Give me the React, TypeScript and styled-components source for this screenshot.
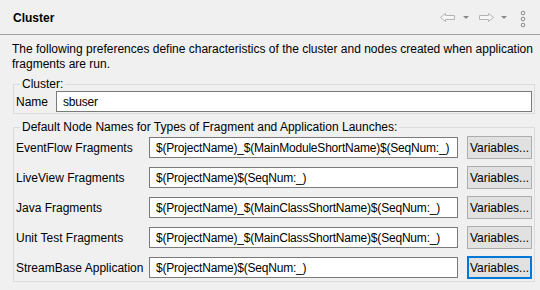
import React from 'react';
import styled, { createGlobalStyle } from 'styled-components';

const GlobalStyle = createGlobalStyle`
  html, body {
    margin: 0;
    padding: 0;
    background: #f0f0f0;
  }
  body {
    font-family: 'Liberation Sans', Arial, sans-serif;
    font-size: 12px;
    color: #000;
  }
`;

const Page = styled.div`
  width: 540px;
  height: 290px;
  overflow: hidden;
  background: #f0f0f0;
`;

const Header = styled.header`
  height: 35px;
  box-sizing: border-box;
  display: flex;
  align-items: center;
  justify-content: space-between;
  padding: 1px 14px 0 13px;
  border-bottom: 1px solid #a0a0a0;
`;

const Title = styled.h1`
  margin: 0;
  font-size: 12px;
  font-weight: bold;
`;

const Toolbar = styled.div`
  display: flex;
  align-items: center;
`;

const ToolIcon = styled.svg<{ $gap?: number; $shift?: number }>`
  display: block;
  margin-left: ${p => p.$gap ?? 0}px;
  margin-top: ${p => p.$shift ?? 0}px;
`;

const Description = styled.p`
  margin: 7px 6px 0 12px;
  line-height: 15px;
`;

const Group = styled.fieldset<{ $top: number }>`
  margin: ${p => p.$top}px 5px 0 13px;
  padding: 0 2px ${p => (p.$top > 5 ? 2 : 1)}px 2px;
  border: 1px solid #dcdcdc;
  min-width: 0;
`;

const Legend = styled.legend`
  padding: 0 2px;
  margin-left: 4px;
  line-height: 14px;
`;

const NameRow = styled.div`
  display: flex;
  align-items: center;
`;

const NameLabel = styled.label`
  width: 40px;
  flex: none;
`;

const TextField = styled.input`
  box-sizing: border-box;
  height: 21px;
  min-width: 0;
  margin: 0;
  padding: 0 6px;
  border: 1px solid #7a7a7a;
  background: #fff;
  font: inherit;
  letter-spacing: -0.2px;
  color: #000;
  outline: none;
`;

const NameField = styled(TextField)`
  flex: 1;
`;

const LaunchGrid = styled.div`
  display: grid;
  grid-template-columns: 124px 1fr 65px;
  column-gap: 9px;
  row-gap: 7px;
  align-items: center;
  padding-top: 2px;
`;

const RowLabel = styled.label`
  white-space: nowrap;
`;

const VarButton = styled.button<{ $focused?: boolean }>`
  box-sizing: border-box;
  height: 23px;
  margin: 0;
  padding: 0;
  background: #e1e1e1;
  border: ${p => (p.$focused ? '2px solid #0078d7' : '1px solid #adadad')};
  font: inherit;
  color: #000;
  white-space: nowrap;
`;

const launches = [
  { label: 'EventFlow Fragments', value: '$(ProjectName)_$(MainModuleShortName)$(SeqNum:_)' },
  { label: 'LiveView Fragments', value: '$(ProjectName)$(SeqNum:_)' },
  { label: 'Java Fragments', value: '$(ProjectName)_$(MainClassShortName)$(SeqNum:_)' },
  { label: 'Unit Test Fragments', value: '$(ProjectName)_$(MainClassShortName)$(SeqNum:_)' },
  { label: 'StreamBase Application', value: '$(ProjectName)$(SeqNum:_)' },
];

const BackArrow = () => (
  <ToolIcon width="15" height="10" viewBox="0 0 15 10">
    <polygon points="0.5,4.5 5.5,0.5 5.5,2.5 14.5,2.5 14.5,6.5 5.5,6.5 5.5,8.5" fill="#f6f6f6" stroke="#b4b4b4" />
  </ToolIcon>
);

const ForwardArrow = ({ gap }: { gap: number }) => (
  <ToolIcon width="15" height="10" viewBox="0 0 15 10" $gap={gap}>
    <polygon points="14.5,4.5 9.5,0.5 9.5,2.5 0.5,2.5 0.5,6.5 9.5,6.5 9.5,8.5" fill="#f6f6f6" stroke="#b4b4b4" />
  </ToolIcon>
);

const DropDown = ({ gap }: { gap: number }) => (
  <ToolIcon width="6" height="3" viewBox="0 0 6 3" $gap={gap}>
    <polygon points="0,0 6,0 3,3" fill="#8a8a8a" />
  </ToolIcon>
);

const ViewMenu = ({ gap }: { gap: number }) => (
  <ToolIcon width="6" height="18" viewBox="0 0 6 18" $gap={gap} $shift={2}>
    <circle cx="3" cy="3" r="1.8" fill="none" stroke="#8a8a8a" />
    <circle cx="3" cy="9" r="1.8" fill="none" stroke="#8a8a8a" />
    <circle cx="3" cy="15" r="1.8" fill="none" stroke="#8a8a8a" />
  </ToolIcon>
);

export default function App() {
  return (
    <Page>
      <GlobalStyle />
      <Header>
        <Title>Cluster</Title>
        <Toolbar>
          <BackArrow />
          <DropDown gap={8} />
          <ForwardArrow gap={10} />
          <DropDown gap={7} />
          <ViewMenu gap={13} />
        </Toolbar>
      </Header>
      <Description>
        The following preferences define characteristics of the cluster and nodes created when application
        fragments are run.
      </Description>
      <Group $top={5}>
        <Legend>Cluster:</Legend>
        <NameRow>
          <NameLabel>Name</NameLabel>
          <NameField defaultValue="sbuser" />
        </NameRow>
      </Group>
      <Group $top={6}>
        <Legend>Default Node Names for Types of Fragment and Application Launches:</Legend>
        <LaunchGrid>
          {launches.map((launch, index) => (
            <React.Fragment key={launch.label}>
              <RowLabel>{launch.label}</RowLabel>
              <TextField defaultValue={launch.value} />
              <VarButton $focused={index === launches.length - 1}>Variables...</VarButton>
            </React.Fragment>
          ))}
        </LaunchGrid>
      </Group>
    </Page>
  );
}
